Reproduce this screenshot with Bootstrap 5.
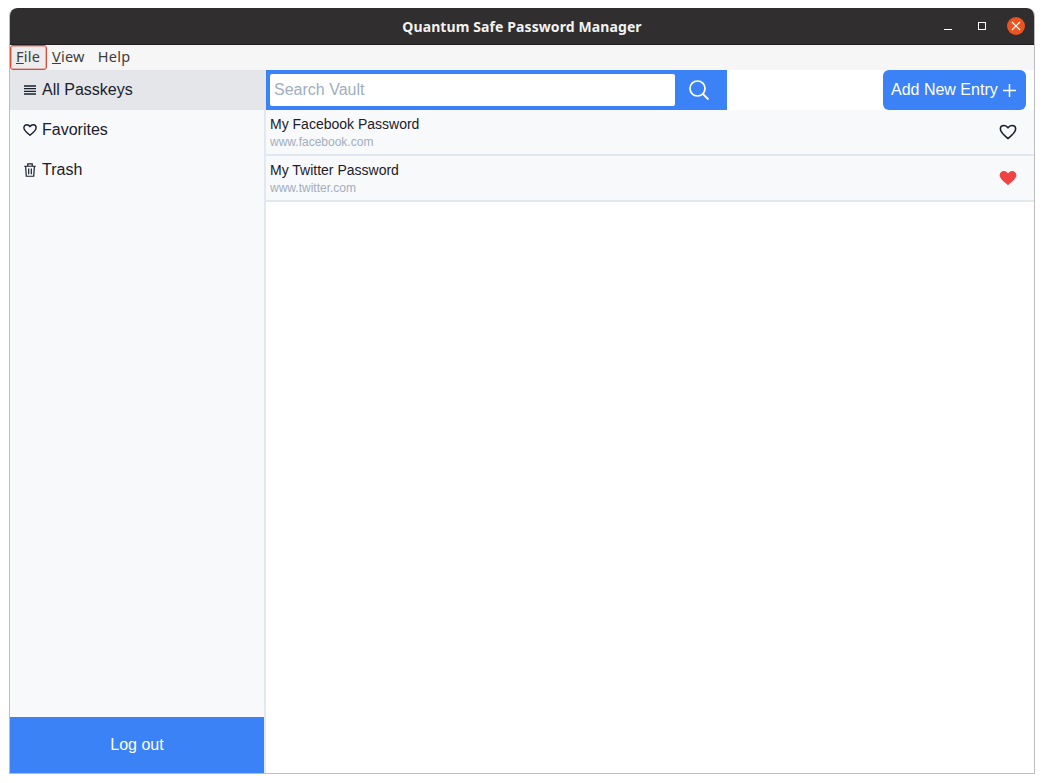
<!DOCTYPE html>
<html lang="en">
<head>
    <meta charset="UTF-8">
    <meta name="viewport" content="width=device-width, initial-scale=1.0">
    <title>Quantum Safe Password Manager</title>

    <link href="https://cdn.jsdelivr.net/npm/bootstrap@5.3.0/dist/css/bootstrap.min.css" rel="stylesheet">
    <style>
        html, body { height: 100%; }
        body { background: #fff; font-family: "Liberation Sans", Arial, sans-serif; color: #1a202c; overflow: hidden; }
        .desk { padding: 8px 9px 9px 9px; height: 783px; }
        .app-window { height: 100%; border: 1px solid #bdbdbd; border-top: 0; border-radius: 8px 8px 0 0; overflow: hidden; }
        .title-bar { height: 37px; margin: 0 -1px; background: #302e2e; border-bottom: 1px solid #1f1d1d; border-radius: 8px 8px 0 0; position: relative; flex: none; }
        .title-text { font-family: "Noto Sans", "Open Sans", sans-serif; font-weight: 700; font-size: 14px; color: #f2f2f2; letter-spacing: .1px; }
        .win-btns { position: absolute; top: 0; bottom: 0; right: 10px; }
        .win-min { width: 8px; height: 1px; background: #fff; margin-top: 7px; margin-right: 26px; }
        .win-max { width: 8px; height: 8px; border: 1px solid #fff; margin-right: 21px; }
        .win-close { width: 18px; height: 18px; border-radius: 50%; background: #e95420; }
        .menu-bar { height: 25px; background: #f6f6f6; font-family: "Noto Sans", "Open Sans", sans-serif; font-size: 14.500px; letter-spacing: .25px; color: #3d3d3d; flex: none; }
        .menu-item { padding: 0 6px; line-height: 23px; height: 25px; }
        .menu-item + .menu-item + .menu-item { margin-left: 1px; }
        .menu-item.is-open { border: 1px solid #e0483a; box-shadow: inset 0 0 0 1px rgba(224, 72, 58, .35); border-radius: 3px; background: #ececec; padding: 0 5px; line-height: 21px; width: 37px; margin-right: -1px; }
        .side { width: 256px; background: #f8f9fb; border-right: 2px solid #e2e8f0; flex: none; }
        .side-link { height: 40px; padding-left: 13px; font-size: 16px; color: #1a202c; gap: 5px; }
        .side-link.is-active { background: #e4e6ea; }
        .side-ico { width: 14px; height: 14px; flex: none; }
        .logout-btn { height: 56px; background: #3b82f6; color: #fff; border: 0; border-radius: 0; font-size: 16px; width: 254px; padding: 0; }
        .top-row { height: 40px; flex: none; }
        .search-box { width: 461px; height: 40px; background: #3b82f6; padding: 4px 0 4px 4px; }
        .search-input { width: 405px; height: 32px; border: 0; border-radius: 2px; font-size: 16px; padding: 0 4px; color: #1a202c; outline: 0; }
        .search-input::placeholder { color: #a0aec0; opacity: 1; }
        .search-go { width: 52px; padding-right: 4px; }
        .add-btn { height: 40px; width: 143px; background: #3b82f6; color: #fff; border: 0; border-radius: 6px; font-size: 16px; margin-right: 8px; padding: 0 0 0 8px; gap: 5px; }
        .entry-row { height: 46px; background: #f8f9fb; border-bottom: 2px solid #e2e8f0; padding: 5px 17px 0 4px; }
        .entry-name { font-size: 14px; line-height: 18px; color: #1a202c; }
        .entry-url { font-size: 12px; line-height: 18px; color: #a0aec0; }
        .heart-ico { margin-top: 9px; }
    </style>
</head>
<body>
<div class="desk">
    <div class="app-window d-flex flex-column">
        <div class="title-bar d-flex align-items-center justify-content-center">
            <span class="title-text">Quantum Safe Password Manager</span>
            <div class="win-btns d-flex align-items-center">
                <span class="win-min"></span>
                <span class="win-max"></span>
                <span class="win-close d-flex align-items-center justify-content-center">
                    <svg width="10" height="10" viewBox="0 0 10 10"><path d="M1 1l8 8M9 1l-8 8" stroke="#fff" stroke-width="1.2"/></svg>
                </span>
            </div>
        </div>
        <div class="menu-bar d-flex">
            <div class="menu-item is-open"><u>F</u>ile</div>
            <div class="menu-item"><u>V</u>iew</div>
            <div class="menu-item">Help</div>
        </div>
        <div class="d-flex flex-grow-1" style="min-height:0">
            <!-- sidebar -->
            <div class="side d-flex flex-column">
                <div class="side-link is-active d-flex align-items-center">
                    <svg class="side-ico" viewBox="0 0 14 14"><path d="M1 3h12M1 5.700h12M1 8.300h12M1 11h12" stroke="#1a202c" stroke-width="1.300"/></svg>
                    <span>All Passkeys</span>
                </div>
                <div class="side-link d-flex align-items-center">
                    <svg class="side-ico" viewBox="0 0 24 24"><path d="M12 21C5 15.500 1.500 12 1.500 8 1.500 5 3.800 3 6.500 3 8.800 3 10.800 4.200 12 6.300 13.200 4.200 15.200 3 17.500 3 20.200 3 22.500 5 22.500 8 22.500 12 19 15.500 12 21z" fill="none" stroke="#1a202c" stroke-width="2.400" stroke-linejoin="round"/></svg>
                    <span>Favorites</span>
                </div>
                <div class="side-link d-flex align-items-center">
                    <svg class="side-ico" viewBox="0 0 14 15"><path d="M.8 3.500h12.400M4.600 3.300V1h4.800v2.300M2.300 3.500l.7 10.700h8l.7-10.700M5.600 6v6M8.400 6v6" fill="none" stroke="#1a202c" stroke-width="1.300"/></svg>
                    <span>Trash</span>
                </div>
                <button type="button" class="btn logout-btn mt-auto">Log out</button>
            </div>
            <!-- list -->
            <div class="flex-grow-1 d-flex flex-column">
                <div class="top-row d-flex justify-content-between">
                    <div class="search-box d-flex">
                        <input type="text" class="search-input" placeholder="Search Vault">
                        <div class="search-go d-flex align-items-center justify-content-center">
                            <svg width="20" height="20" viewBox="0 0 20 20"><circle cx="8.500" cy="8.500" r="7.500" fill="none" stroke="#fff" stroke-width="1.700"/><path d="M14 14l5.500 5.500" stroke="#fff" stroke-width="1.900"/></svg>
                        </div>
                    </div>
                    <button type="button" class="btn add-btn d-flex align-items-center">
                        <span>Add New Entry</span>
                        <svg width="13" height="13" viewBox="0 0 13 13"><path d="M6.500 0v13M0 6.500h13" stroke="#fff" stroke-width="1.500"/></svg>
                    </button>
                </div>
                <div class="entry-row d-flex justify-content-between">
                    <div>
                        <div class="entry-name">My Facebook Password</div>
                        <div class="entry-url">www.facebook.com</div>
                    </div>
                    <svg class="heart-ico" width="18" height="16" viewBox="0 0 24 22"><path d="M12 20C5 14.500 1.500 11 1.500 7 1.500 4 3.800 2 6.500 2 8.800 2 10.800 3.200 12 5.300 13.200 3.200 15.200 2 17.500 2 20.200 2 22.500 4 22.500 7 22.500 11 19 14.500 12 20z" fill="none" stroke="#1a202c" stroke-width="2.200" stroke-linejoin="round"/></svg>
                </div>
                <div class="entry-row d-flex justify-content-between">
                    <div>
                        <div class="entry-name">My Twitter Password</div>
                        <div class="entry-url">www.twitter.com</div>
                    </div>
                    <svg class="heart-ico" width="18" height="16" viewBox="0 0 24 22"><path d="M12 21C5 15 .5 11.500 .5 7 .5 3.800 3 1.500 6.300 1.500 8.800 1.500 10.800 2.800 12 5 13.200 2.800 15.200 1.500 17.700 1.500 21 1.500 23.500 3.800 23.500 7 23.500 11.500 19 15 12 21z" fill="#f04444"/></svg>
                </div>
            </div>
        </div>
    </div>
</div>
<script src="https://cdn.jsdelivr.net/npm/bootstrap@5.3.0/dist/js/bootstrap.bundle.min.js"></script>
</body>
</html>
